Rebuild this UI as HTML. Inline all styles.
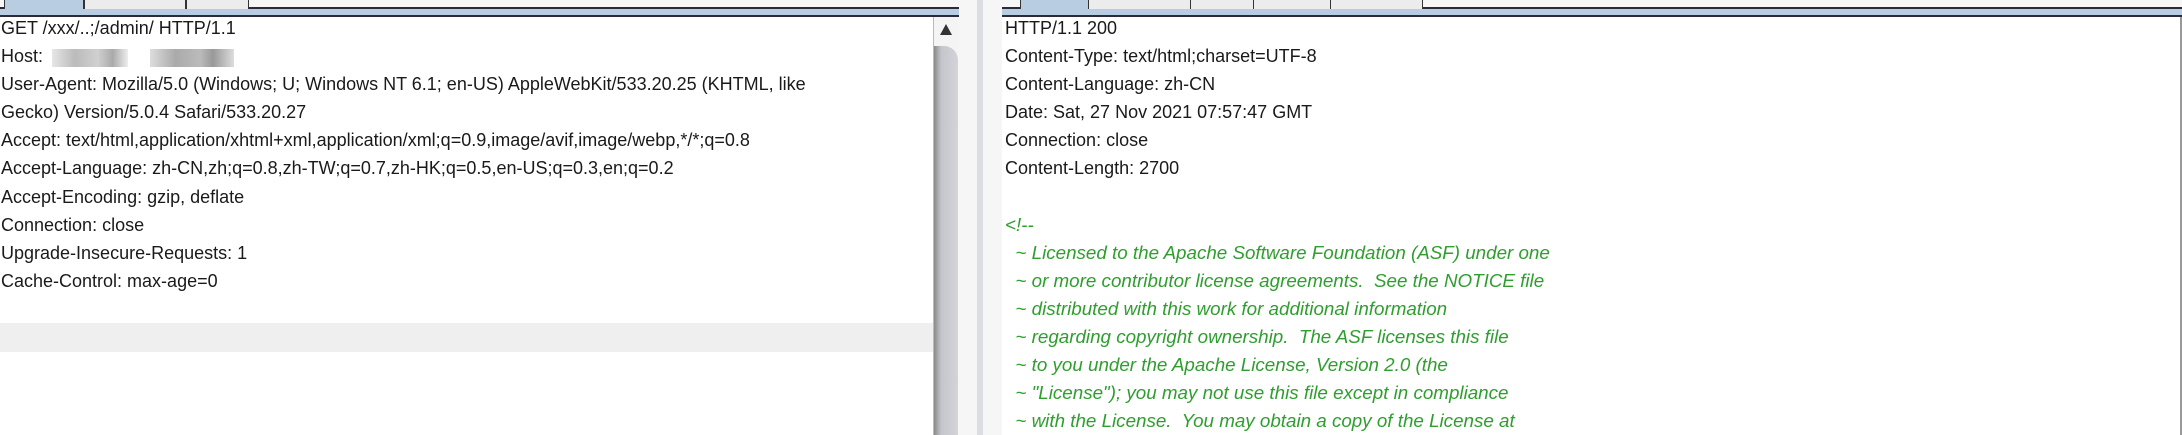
<!DOCTYPE html>
<html><head><meta charset="utf-8"><style>
*{margin:0;padding:0;box-sizing:border-box}
body{width:2182px;height:435px;overflow:hidden;background:#f6f6f6;position:relative;font-family:"Liberation Sans",sans-serif;font-size:18px;color:#1a1a1a}
.abs{position:absolute}
.band{position:absolute;top:7px;height:10px;background:#b8cde2;border-top:2px solid #2a2a38;border-bottom:2px solid #2a2a38}
.tab{position:absolute;top:0;height:9px;background:#ececec;border-left:1px solid #333;border-right:1px solid #333}
.tab.sel{background:#b8cde2}
.pane{position:absolute;top:17px;bottom:0;background:#fff}
.txt{position:absolute;line-height:28.1px;white-space:pre}
.g{color:#2e9e2e;font-style:italic;font-size:18.8px}
</style></head><body>
<div class="band" style="left:0;width:959px"></div>
<div class="tab sel" style="left:4px;width:80px"></div>
<div class="tab" style="left:84px;width:102px"></div>
<div class="tab" style="left:186px;width:63px"></div>
<div class="band" style="left:1002px;width:1180px"></div>
<div class="tab sel" style="left:1020px;width:69px"></div>
<div class="tab" style="left:1088px;width:103px"></div>
<div class="tab" style="left:1190px;width:64px"></div>
<div class="tab" style="left:1253px;width:78px"></div>
<div class="tab" style="left:1330px;width:93px"></div>

<div class="pane" style="left:0;width:933px"></div>
<div class="abs" style="left:0;top:323px;width:933px;height:29px;background:#efefef"></div>
<div class="txt" style="left:1px;top:14px">GET /xxx/..;/admin/ HTTP/1.1
Host: 
User-Agent: Mozilla/5.0 (Windows; U; Windows NT 6.1; en-US) AppleWebKit/533.20.25 (KHTML, like
Gecko) Version/5.0.4 Safari/533.20.27
Accept: text/html,application/xhtml+xml,application/xml;q=0.9,image/avif,image/webp,*/*;q=0.8
Accept-Language: zh-CN,zh;q=0.8,zh-TW;q=0.7,zh-HK;q=0.5,en-US;q=0.3,en;q=0.2
Accept-Encoding: gzip, deflate
Connection: close
Upgrade-Insecure-Requests: 1
Cache-Control: max-age=0</div>
<div class="abs" style="left:52px;top:49px;width:76px;height:18px;background:linear-gradient(90deg,#e6e6e6,#bbb 30%,#d0d0d0 60%,#aaa 80%,#eee)"></div>
<div class="abs" style="left:150px;top:49px;width:84px;height:18px;background:linear-gradient(90deg,#ddd,#aaa 30%,#bbb 60%,#999 75%,#ddd)"></div>

<div class="abs" style="left:933px;top:17px;width:25px;height:418px;background:#f4f4f4;border-left:1px solid #bbb"></div>
<div class="abs" style="left:940px;top:24px;width:0;height:0;border-left:6px solid transparent;border-right:6px solid transparent;border-bottom:11px solid #333"></div>
<div class="abs" style="left:934px;top:46px;width:24px;height:389px;background:linear-gradient(90deg,#8a8a8a,#c4c6cc 30%,#d2d4da);border-top-right-radius:14px"></div>
<div class="abs" style="left:977px;top:0;width:6px;height:435px;background:#dcdde3"></div>

<div class="pane" style="left:1002px;width:1178px"></div>
<div class="abs" style="left:2180px;top:17px;width:2px;height:418px;background:#999"></div>
<div class="txt" style="left:1005px;top:14px">HTTP/1.1 200
Content-Type: text/html;charset=UTF-8
Content-Language: zh-CN
Date: Sat, 27 Nov 2021 07:57:47 GMT
Connection: close
Content-Length: 2700

<span class="g">&lt;!--
  ~ Licensed to the Apache Software Foundation (ASF) under one
  ~ or more contributor license agreements.  See the NOTICE file
  ~ distributed with this work for additional information
  ~ regarding copyright ownership.  The ASF licenses this file
  ~ to you under the Apache License, Version 2.0 (the
  ~ "License"); you may not use this file except in compliance
  ~ with the License.  You may obtain a copy of the License at</span></div>
</body></html>
